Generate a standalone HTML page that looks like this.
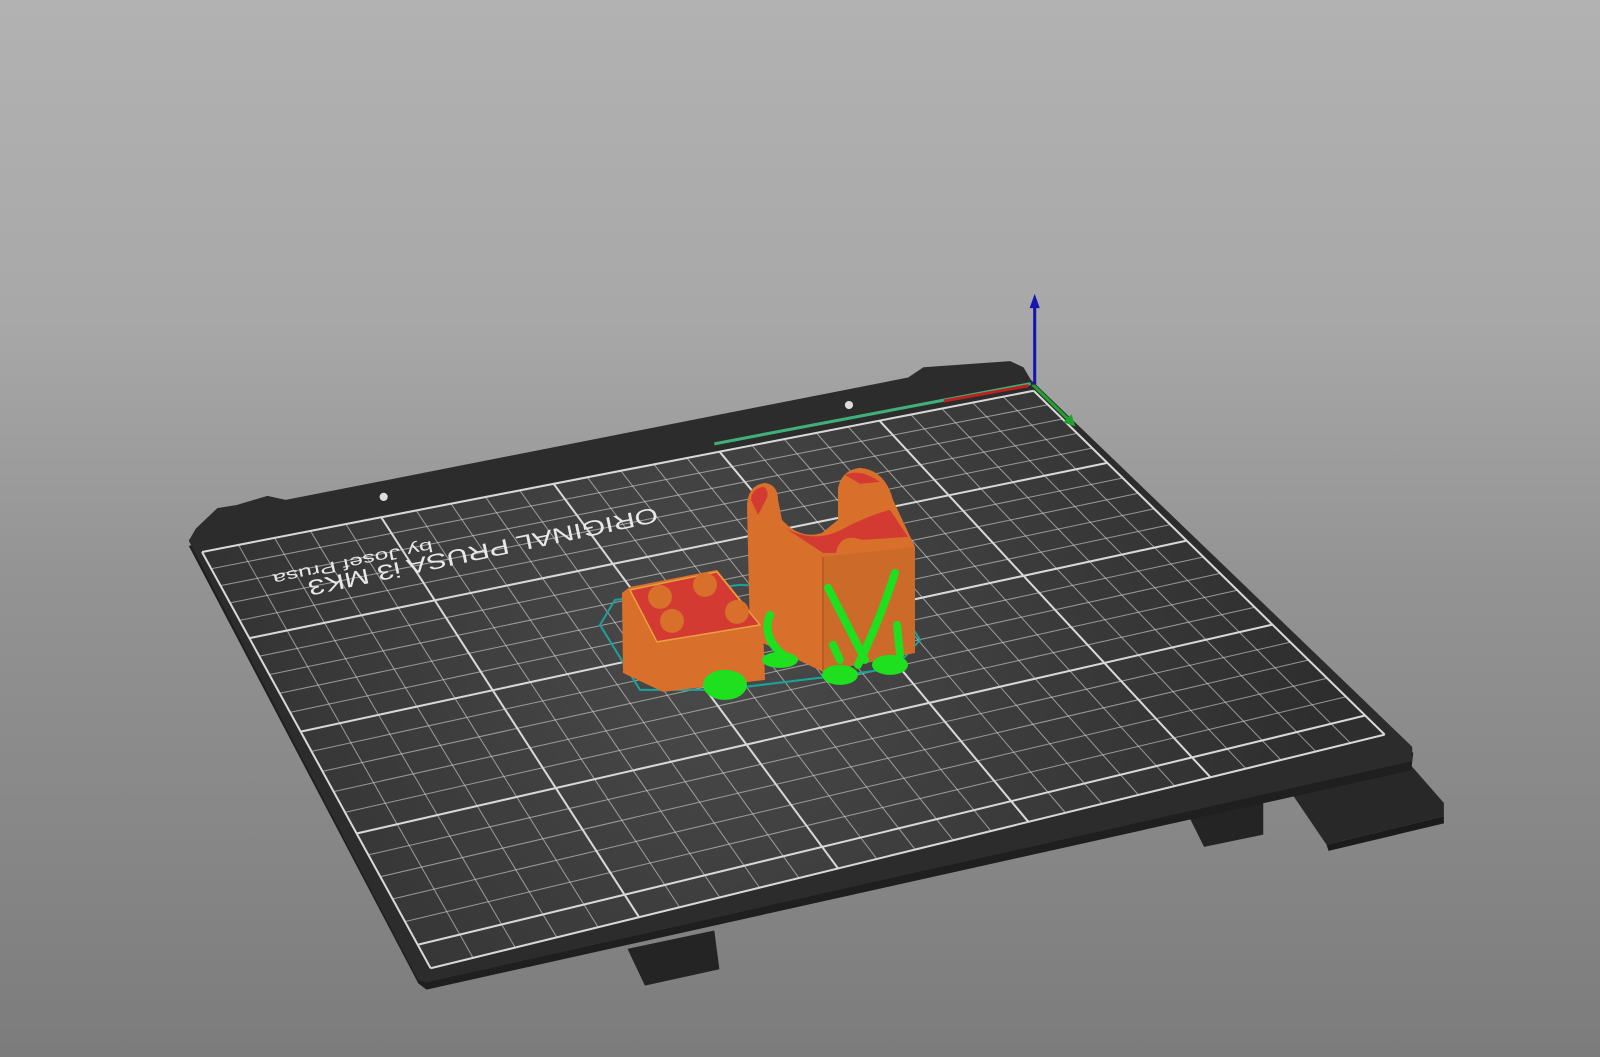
<!DOCTYPE html>
<html><head><meta charset="utf-8"><style>
html,body{margin:0;padding:0;width:1600px;height:1057px;overflow:hidden}
body{background:linear-gradient(#b2b2b2 0%,#a8a8a8 30%,#939393 55%,#7c7c7c 100%)}
svg{position:absolute;left:0;top:0}
</style></head><body>
<svg id="s" width="1600" height="1057" viewBox="0 0 1568 1036" preserveAspectRatio="none" xmlns="http://www.w3.org/2000/svg">
<defs>
<radialGradient id="bed" cx="700" cy="640" r="600" gradientUnits="userSpaceOnUse">
<stop offset="0" stop-color="#4a4a4a"/><stop offset="1" stop-color="#2e2e2e"/></radialGradient>
</defs>
<!-- tabs under -->
<polygon points="615,930 700,912 705,950 632,966" fill="#242424"/>
<polygon points="1165,800 1238,784 1238,818 1180,830" fill="#242424"/>
<polygon points="1262,772 1380,747 1415,787 1415,800 1300,828" fill="#282828"/>
<polygon points="1300,828 1415,800 1415,807 1302,834" fill="#1b1b1b"/>
<!-- plate side/thickness -->
<polygon points="185,535 410,964 418,970 1383,755 1385,738 1000,370" fill="#1f1f1f"/>
<!-- plate top -->
<path d="M192,518 L213,498 L232,495 L262,486 L280,490 L890,370 L905,360 L990,354 L1003,360 L1010,372 L1384,732 L1384,746 L418,963 L410,961 L185,530 Z" fill="#2c2c2c"/>
<path d="M198,541 L1013,383 L1357,720 L422,949 Z" fill="url(#bed)"/>
<circle cx="376" cy="487" r="4" fill="#ddd"/>
<circle cx="832" cy="397" r="4" fill="#ddd"/>
<g id="grid" stroke="#d8d8d8" fill="none"></g>
<text transform="translate(643,497) rotate(168)" font-family="Liberation Sans, sans-serif" font-size="21" fill="#e8e8e8" textLength="350" lengthAdjust="spacingAndGlyphs">ORIGINAL PRUSA i3 MK3</text>
<text transform="translate(423,530) rotate(168)" font-family="Liberation Sans, sans-serif" font-size="15" fill="#e8e8e8" textLength="160" lengthAdjust="spacingAndGlyphs">by Josef Prusa</text>
<line x1="700" y1="435" x2="1010" y2="376" stroke="#3fb07a" stroke-width="3"/>
<line x1="925" y1="393" x2="1008" y2="378" stroke="#c02020" stroke-width="3"/>
<line x1="1012" y1="377" x2="1048" y2="412" stroke="#1fa02f" stroke-width="3"/>
<polygon points="1042,414 1054,418 1050,406" fill="#1fa02f"/>
<line x1="1014" y1="377" x2="1014" y2="298" stroke="#1515b0" stroke-width="3"/>
<polygon points="1009,302 1019,302 1014,288" fill="#1515b0"/>
<g transform="scale(0.98)">
<path d="M600,625 L615,600 L740,585 L890,592 L920,640 L895,668 L860,673 L720,690 L640,690 Z" fill="none" stroke="#1aa39a" stroke-width="2"/>
<path d="M747,505 Q748,485 765,483 Q778,485 778,500 L782,520 Q800,540 822,533 L838,520 L838,488 Q842,470 860,468 Q885,470 893,500 L915,547 L915,653 L823,672 L750,637 Z" fill="#d8702c"/>
<path d="M823,557 L915,547 L915,653 L823,672 Z" fill="#cc6a2a"/>
<path d="M751,500 Q752,488 764,487 Q770,492 766,500 L758,515 Z" fill="#d23a32"/>
<path d="M845,475 Q860,468 880,482 L860,484 Z" fill="#d23a32"/>
<path d="M785,528 Q815,545 845,528 Q870,515 890,510 L908,537 L862,540 Q840,532 836,553 L823,553 Z" fill="#d23a32"/>
<line x1="823" y1="557" x2="823" y2="670" stroke="#b85d22" stroke-width="2"/>
<path d="M622,593 L630,587 L717,570 L763,627 L765,680 L663,692 L623,673 Z" fill="#d8702c"/>
<path d="M630,590 L717,572 L760,625 L657,642 Z" fill="#d23a32" stroke="#e8a040" stroke-width="1.5"/>
<g fill="#d8702c"><circle cx="660" cy="597" r="12"/><circle cx="705" cy="585" r="12"/><circle cx="672" cy="621" r="12"/><circle cx="737" cy="612" r="12"/></g>
<g stroke="#1ee01e" stroke-width="8" fill="none" stroke-linecap="round">
<path d="M828,588 Q850,630 865,660"/>
<path d="M895,573 Q880,620 858,665"/>
<path d="M833,645 L840,660"/>
<path d="M897,625 L900,655"/>
<path d="M770,615 Q760,640 790,660"/>
</g>
<g fill="#1ee01e">
<ellipse cx="840" cy="675" rx="18" ry="10"/>
<ellipse cx="890" cy="665" rx="18" ry="10"/>
<ellipse cx="725" cy="685" rx="22" ry="15"/>
<ellipse cx="780" cy="660" rx="18" ry="8"/>
</g>
</g>
</svg>
<script>
(function(){
function H(p){
var x0=p[0][0],y0=p[0][1],x1=p[1][0],y1=p[1][1],x2=p[2][0],y2=p[2][1],x3=p[3][0],y3=p[3][1];
var dx1=x1-x2,dx2=x3-x2,dy1=y1-y2,dy2=y3-y2,sx=x0-x1+x2-x3,sy=y0-y1+y2-y3;
var den=dx1*dy2-dx2*dy1;var g=(sx*dy2-dx2*sy)/den,h=(dx1*sy-sx*dy1)/den;
var a=x1-x0+g*x1,b=x3-x0+h*x3,c=x0,d=y1-y0+g*y1,e=y3-y0+h*y3,f=y0;
return function(u,v){var w=g*u+h*v+1;return [(a*u+b*v+c)/w,(d*u+e*v+f)/w];};
}
var m=H([[1013,383],[198,541],[422,949],[1357,720]]);
var g=document.getElementById('grid'),s='';
function L(a,b,w,op){s+='<line x1="'+a[0].toFixed(1)+'" y1="'+a[1].toFixed(1)+'" x2="'+b[0].toFixed(1)+'" y2="'+b[1].toFixed(1)+'" stroke-width="'+w+'" stroke-opacity="'+op+'"/>';}
for(var i=0;i<=25;i++){var u=i/25;var maj=(i%5==0);L(m(u,0),m(u,1),maj?2:1,maj?1:0.6);}
for(var j=0;j<=21;j++){var v=j/21;var maj=(j%5==0)||j==21;L(m(0,v),m(1,v),maj?2:1,maj?1:0.6);}
g.innerHTML=s;
})();
</script>
</body></html>
